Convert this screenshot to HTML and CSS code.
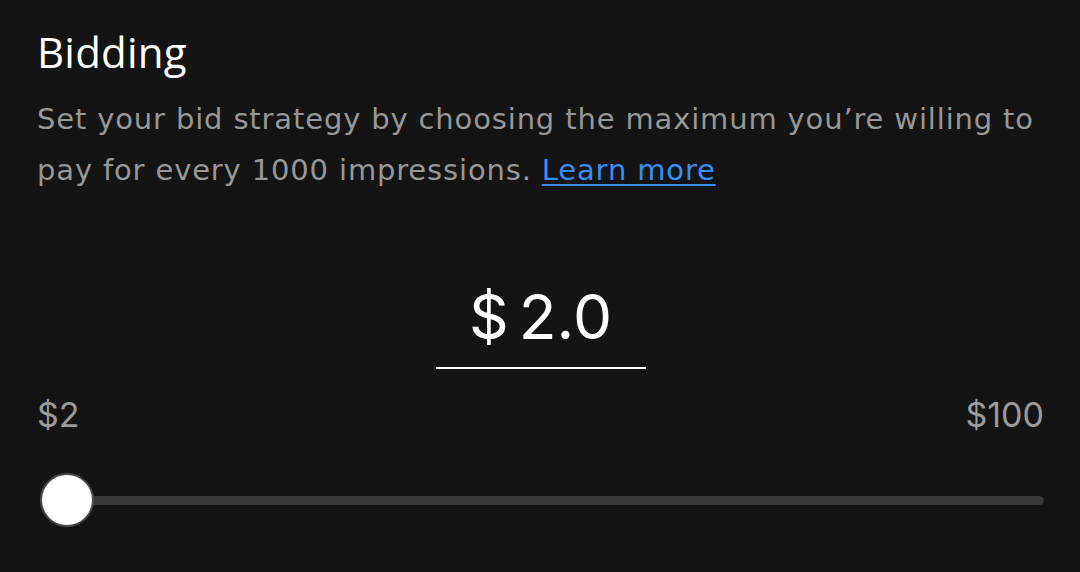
FILE: index.html
```html
<!DOCTYPE html>
<html lang="en">
<head>
<meta charset="utf-8">
<link rel="stylesheet" href="styles.css">
</head>
<body>
<main class="panel">
  <h1 class="title">Bidding</h1>
  <p class="desc">Set your bid strategy by choosing the maximum you’re willing to pay for every 1000 impressions. <a class="link" href="#">Learn more</a></p>
  <div class="amount-wrap">
    <div class="amount"><span class="cur">$</span><span class="val">2.0</span></div>
  </div>
  <div class="range-labels"><span>$2</span><span>$100</span></div>
  <div class="slider">
    <div class="track"></div>
    <div class="thumb"></div>
  </div>
</main>
</body>
</html>
```
FILE: styles.css
```css
html, body {
  margin: 0;
  padding: 0;
  background: #141414;
}
body {
  width: 1080px;
  height: 572px;
  overflow: hidden;
  font-family: "Open Sans", "Liberation Sans", sans-serif;
}
.panel {
  padding: 25px 36px 0 37px;
}
.title {
  margin: 0;
  font-family: "Open Sans", sans-serif;
  font-weight: 500;
  font-size: 42px;
  line-height: 54px;
  color: #ffffff;
  letter-spacing: 0.2px;
}
.desc {
  margin: 15px 0 0 0;
  font-family: "DejaVu Sans", sans-serif;
  font-size: 29px;
  line-height: 51px;
  font-weight: 400;
  color: #979797;
  letter-spacing: 0.85px;
}
.link {
  color: #3a8cf6;
  text-decoration: underline;
  text-underline-offset: 4px;
  text-decoration-thickness: 2px;
}
.amount-wrap {
  display: flex;
  justify-content: center;
  margin-top: 89px;
}
.amount {
  width: 210px;
  border-bottom: 2px solid #ffffff;
  display: flex;
  justify-content: center;
  align-items: baseline;
  gap: 10px;
  color: #ffffff;
  font-family: "Inter", sans-serif;
  font-size: 62px;
  line-height: 64px;
  padding-bottom: 18px;
}
.cur {
  font-weight: 400;
}
.val {
  font-weight: 400;
}
.range-labels {
  display: flex;
  justify-content: space-between;
  margin-top: 26px;
  font-family: "Inter", sans-serif;
  font-size: 34px;
  line-height: 40px;
  color: #9b9b9b;
}
.slider {
  position: relative;
  margin-top: 37px;
  height: 56px;
  display: flex;
  align-items: center;
}
.track {
  flex: 1;
  height: 9px;
  border-radius: 5px;
  background: #393939;
  margin-left: 20px;
}
.thumb {
  position: absolute;
  left: 3px;
  top: 1px;
  width: 50px;
  height: 50px;
  border-radius: 50%;
  background: #ffffff;
  border: 2px solid #4a4a4a;
}
```
